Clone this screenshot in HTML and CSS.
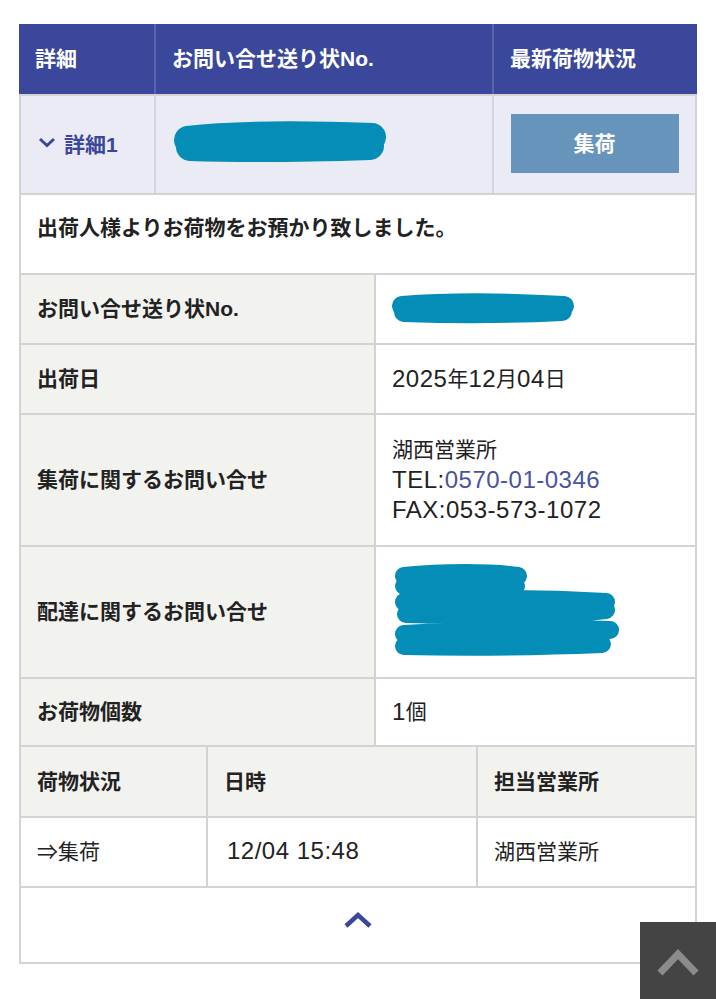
FILE: index.html
```html
<!DOCTYPE html>
<html lang="ja">
<head>
<meta charset="utf-8">
<title>お問い合せ結果</title>
<link rel="stylesheet" href="styles.css">
</head>
<body>
<div class="page">
  <div class="panel">
    <div class="head-row">
      <div class="hcell">詳細</div>
      <div class="hcell">お問い合せ送り状No.</div>
      <div class="hcell">最新荷物状況</div>
    </div>
    <div class="sum-row">
      <div class="scell">
        <span class="toggle">
          <svg class="chev-down" width="18" height="11" viewBox="0 0 18 11"><path d="M2 2 L9 8.5 L16 2" fill="none" stroke="#3b479b" stroke-width="3"/></svg>
          詳細1
        </span>
      </div>
      <div class="scell">
        <svg class="blot" width="222" height="44" viewBox="0 0 222 44"><path d="M18 19 C60 14 120 13 202 16 M20 26 C80 28 140 27 200 25" fill="none" stroke="#048db6" stroke-width="28" stroke-linecap="round"/></svg>
      </div>
      <div class="scell center">
        <span class="status-btn">集荷</span>
      </div>
    </div>
    <div class="msg">出荷人様よりお荷物をお預かり致しました。</div>
    <div class="drow">
      <div class="label">お問い合せ送り状No.</div>
      <div class="value">
        <svg class="blot" width="190" height="34" viewBox="0 0 190 34"><path d="M10 14 C60 10 120 11 172 14 M12 20 C70 22 130 21 170 19" fill="none" stroke="#048db6" stroke-width="20" stroke-linecap="round"/></svg>
      </div>
    </div>
    <div class="drow">
      <div class="label">出荷日</div>
      <div class="value"><span class="lat">2025</span>年<span class="lat">12</span>月<span class="lat">04</span>日</div>
    </div>
    <div class="drow tall">
      <div class="label">集荷に関するお問い合せ</div>
      <div class="value">
        <div>湖西営業所</div>
        <div class="lat">TEL:<a class="tel" href="#">0570-01-0346</a></div>
        <div class="lat">FAX:053-573-1072</div>
      </div>
    </div>
    <div class="drow tall">
      <div class="label">配達に関するお問い合せ</div>
      <div class="value">
        <svg class="blot" width="240" height="96" viewBox="0 0 240 96"><path d="M12 12 C50 8 100 8 126 12 M12 22 C60 24 100 24 124 22 M12 38 C80 34 150 34 214 38 M14 50 C90 52 160 52 214 46 M12 70 C80 66 160 64 218 66 M12 82 C90 84 160 82 210 80" fill="none" stroke="#048db6" stroke-width="18" stroke-linecap="round"/></svg>
      </div>
    </div>
    <div class="drow short">
      <div class="label">お荷物個数</div>
      <div class="value"><span class="lat">1</span>個</div>
    </div>
    <div class="hist-row hist-head">
      <div class="hist-cell">荷物状況</div>
      <div class="hist-cell">日時</div>
      <div class="hist-cell">担当営業所</div>
    </div>
    <div class="hist-row">
      <div class="hist-cell">⇒集荷</div>
      <div class="hist-cell lat">12/04 15:48</div>
      <div class="hist-cell">湖西営業所</div>
    </div>
    <div class="close-row">
      <svg width="30" height="18" viewBox="0 0 30 18"><path d="M3 15 L15 4 L27 15" fill="none" stroke="#3b479b" stroke-width="4.5"/></svg>
    </div>
  </div>
</div>
<a class="to-top" href="#">
  <svg width="44" height="30" viewBox="0 0 44 30"><path d="M4 26 L22 7 L40 26" fill="none" stroke="#8b8b8b" stroke-width="7"/></svg>
</a>
</body>
</html>
```
FILE: styles.css
```css
html, body {
  margin: 0;
  padding: 0;
  background: #ffffff;
}
body {
  font-family: "Liberation Sans", "Noto Sans CJK JP", sans-serif;
  font-size: 21px;
  color: #222222;
  width: 716px;
  height: 999px;
  overflow: hidden;
}
.page {
  padding: 24px 19px 0;
}
.panel {
  display: grid;
  row-gap: 2px;
  background: #d3d3d3;
  border: 2px solid #d3d3d3;
  border-top: 0;
}
.head-row {
  display: grid;
  grid-template-columns: 135px 336px 1fr;
  column-gap: 2px;
  background: #5a65ad;
  height: 70px;
  margin: 0 -2px;
}
.hcell {
  background: #3b479b;
  color: #ffffff;
  font-weight: bold;
  display: flex;
  align-items: center;
  padding: 0 0 4px 16px;
}
.sum-row {
  display: grid;
  grid-template-columns: 133px 336px 1fr;
  column-gap: 2px;
  background: #d4d5de;
  height: 97px;
}
.scell {
  background: #eaebf5;
  display: flex;
  align-items: center;
  padding: 0 0 4px 14px;
}
.scell.center {
  justify-content: center;
  padding: 0 0 3px 0;
}
.toggle {
  display: flex;
  align-items: center;
  gap: 8px;
  color: #3b479b;
  font-weight: bold;
  padding-left: 3px;
}
.status-btn {
  width: 168px;
  height: 59px;
  background: #6694ba;
  color: #ffffff;
  font-weight: bold;
  display: flex;
  align-items: center;
  justify-content: center;
  padding-bottom: 3px;
  box-sizing: border-box;
}
.blot {
  display: block;
}
.msg {
  background: #ffffff;
  font-weight: bold;
  height: 78px;
  box-sizing: border-box;
  padding: 18px 16px 0;
  line-height: 30px;
}
.drow {
  display: grid;
  grid-template-columns: 353px 1fr;
  column-gap: 2px;
  min-height: 68px;
}
.drow.tall {
  min-height: 130px;
}
.drow.short {
  min-height: 66px;
}
.label {
  background: #f2f2ef;
  font-weight: bold;
  display: flex;
  align-items: center;
  padding: 0 0 4px 16px;
}
.value {
  background: #ffffff;
  display: flex;
  flex-direction: column;
  justify-content: center;
  padding: 0 16px;
  line-height: 30px;
}
.drow .value:not(:has(div)) {
  flex-direction: row;
  align-items: center;
  justify-content: flex-start;
}
.lat {
  font-size: 24px;
  letter-spacing: 0.5px;
}
.tel {
  color: #4a53a0;
  text-decoration: none;
}
.hist-row {
  display: grid;
  grid-template-columns: 185px 268px 1fr;
  column-gap: 2px;
  height: 68px;
}
.hist-head {
  height: 69px;
}
.hist-cell {
  background: #ffffff;
  display: flex;
  align-items: center;
  padding: 0 0 4px 16px;
}
.hist-cell.lat {
  padding: 0 0 2px 19px;
}
.hist-head .hist-cell {
  background: #f2f2ef;
  font-weight: bold;
}
.close-row {
  background: #ffffff;
  height: 74px;
  display: flex;
  align-items: center;
  justify-content: center;
  padding-bottom: 10px;
  box-sizing: border-box;
}
.to-top {
  position: fixed;
  right: 0;
  bottom: 0;
  width: 76px;
  height: 77px;
  background: #444444;
  display: flex;
  align-items: center;
  justify-content: center;
}
.to-top svg {
  margin-top: 2px;
}
```
